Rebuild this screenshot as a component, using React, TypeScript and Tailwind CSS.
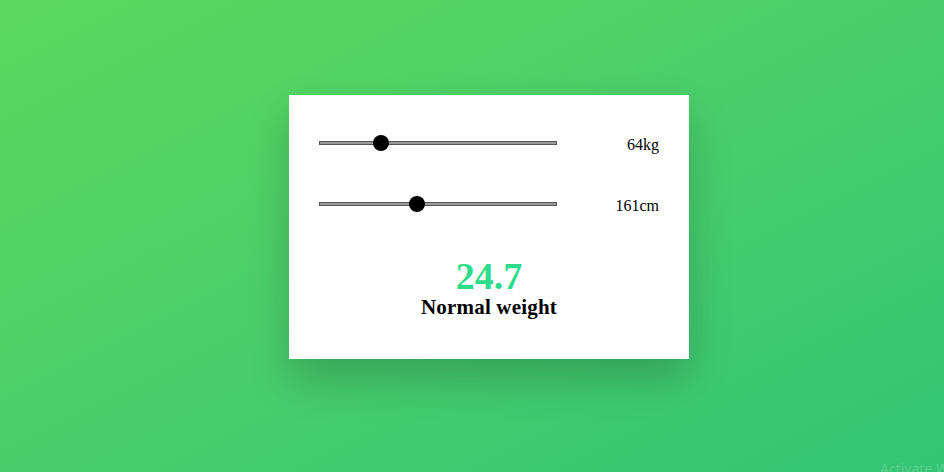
import { useState } from 'react';

const sliderClass =
  'appearance-none w-[238px] h-[4px] bg-[#9a9a9a] border border-[#555] outline-none [&::-webkit-slider-thumb]:appearance-none [&::-webkit-slider-thumb]:w-[16px] [&::-webkit-slider-thumb]:h-[16px] [&::-webkit-slider-thumb]:rounded-full [&::-webkit-slider-thumb]:bg-black [&::-webkit-slider-thumb]:border-0';

export default function App() {
  const [weight, setWeight] = useState(64);
  const [height, setHeight] = useState(161);
  const bmi = (weight / Math.pow(height / 100, 2)).toFixed(1);

  return (
    <div
      className="relative w-[944px] h-[472px] overflow-hidden bg-gradient-to-br from-[#5bd95d] to-[#33c475] flex justify-center pl-[34px] pt-[95px]"
      style={{ fontFamily: '"Liberation Serif", "Times New Roman", serif' }}
    >
      <div className="w-[400px] h-[264px] bg-white shadow-[0_20px_40px_rgba(0,0,0,0.2)] px-[30px] pt-[38px] flex flex-col">
        <div className="flex items-center justify-between h-[20px]">
          <input
            type="range"
            min={40}
            max={140}
            value={weight}
            onChange={(e) => setWeight(Number(e.target.value))}
            className={sliderClass}
          />
          <span className="mt-[3px] text-[16px] text-black">{weight}kg</span>
        </div>
        <div className="flex items-center justify-between h-[20px] mt-[41px]">
          <input
            type="range"
            min={100}
            max={250}
            value={height}
            onChange={(e) => setHeight(Number(e.target.value))}
            className={sliderClass}
          />
          <span className="mt-[3px] text-[16px] text-black">{height}cm</span>
        </div>
        <div className="mt-[41px] text-center text-[38px] leading-[42px] font-bold text-[#2ddc8b]">{bmi}</div>
        <div className="-mt-[1px] text-center text-[21px] leading-[23px] font-bold tracking-[0.2px] text-black">
          Normal weight
        </div>
      </div>
      <div className="absolute left-[880px] top-[458px] text-[14px] text-white/20 whitespace-nowrap font-sans">
        Activate Windows
      </div>
    </div>
  );
}
